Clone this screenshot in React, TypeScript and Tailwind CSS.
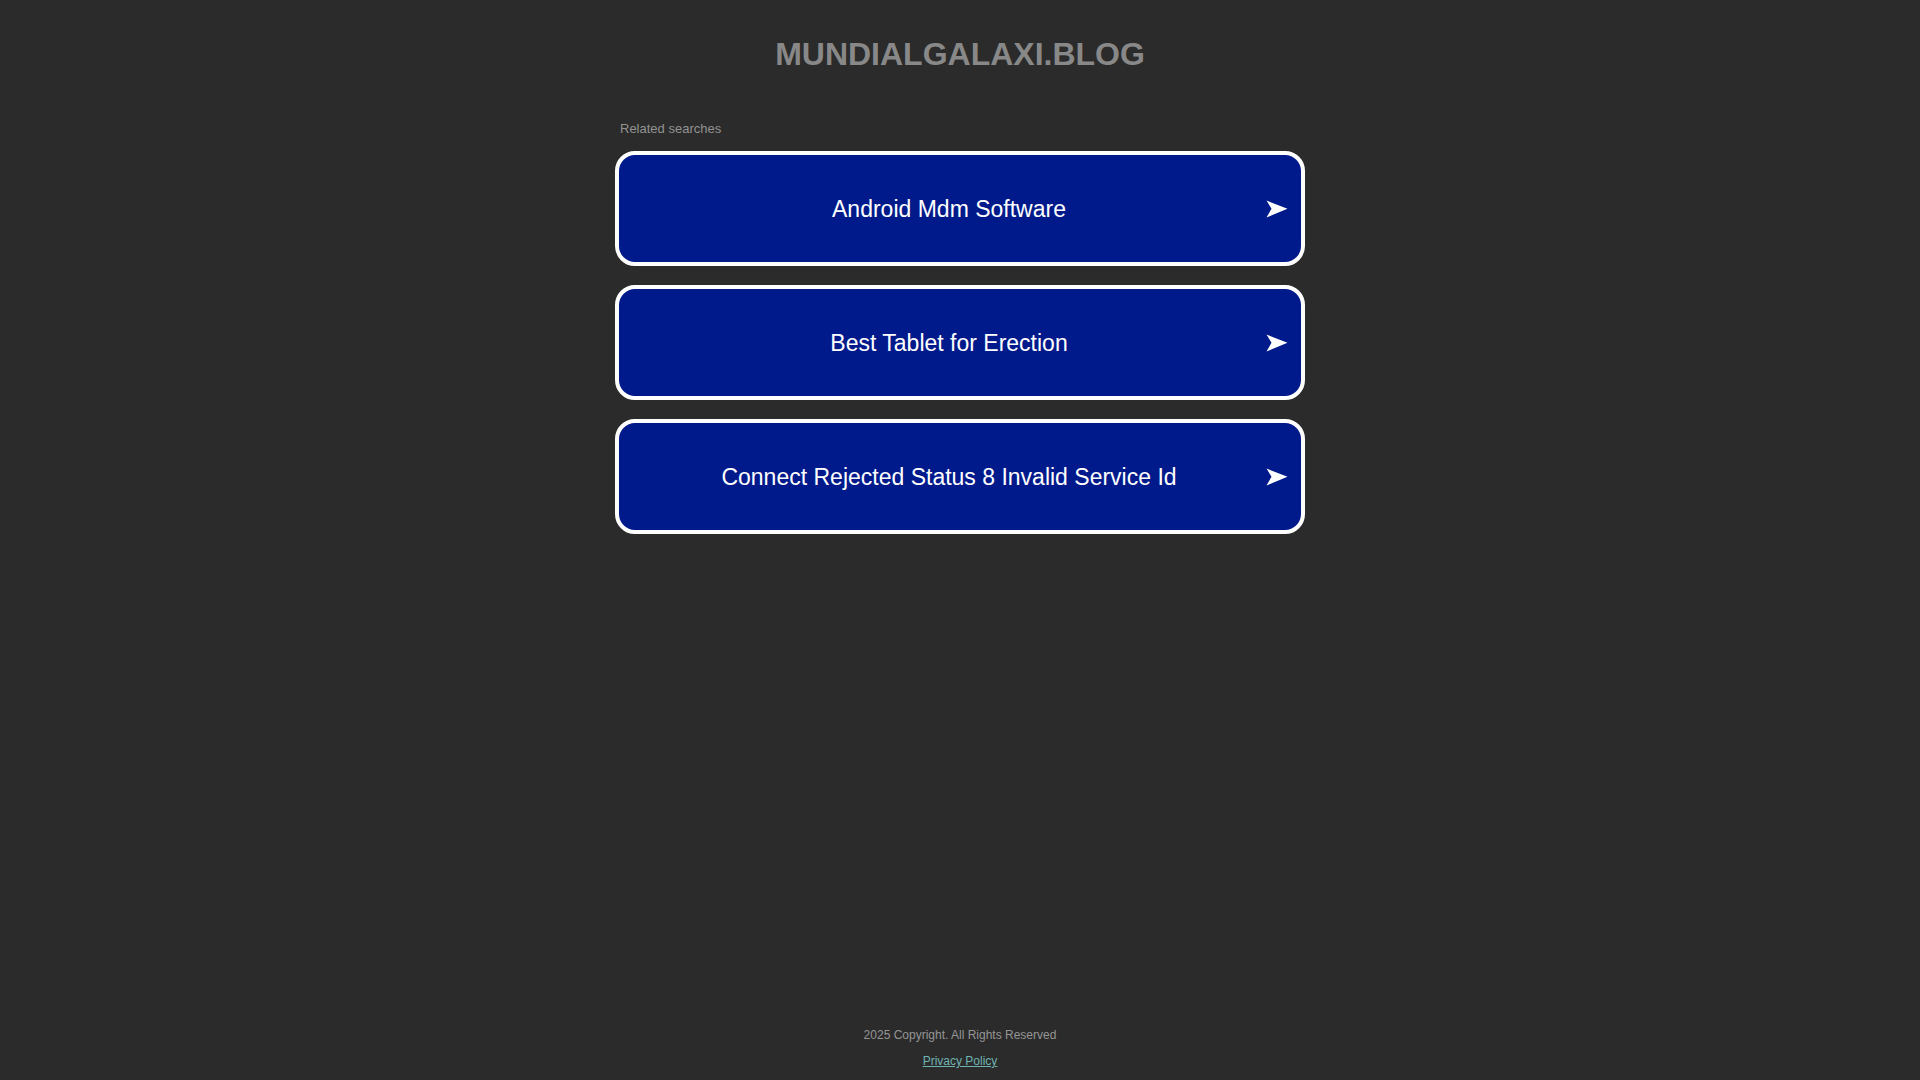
import React from "react";

const items = [
  "Android Mdm Software",
  "Best Tablet for Erection",
  "Connect Rejected Status 8 Invalid Service Id",
];

function Arrow() {
  return (
    <svg width="22" height="18" viewBox="0 0 22 18" className="block">
      <path d="M0.5 0.5 L21.5 8.8 L0.5 17.5 L5.5 8.8 Z" fill="#ffffff" />
    </svg>
  );
}

export default function App() {
  return (
    <div
      className="min-h-screen flex flex-col bg-[#2b2b2b]"
      style={{ fontFamily: '"Liberation Sans", Arial, sans-serif' }}
    >
      <h1 className="pt-[36px] text-center text-[32px] leading-[37px] font-bold text-[#888888]">
        MUNDIALGALAXI.BLOG
      </h1>
      <div className="mx-auto w-[690px] mt-[48px]">
        <div className="pl-[5px] text-[13px] leading-[15px] text-[#929292]">
          Related searches
        </div>
        <div className="mt-[15px] flex flex-col gap-[19px]">
          {items.map((t) => (
            <a
              key={t}
              href="#"
              className="relative flex h-[115px] items-center justify-center rounded-[20px] border-[4px] border-white bg-[#011a8b] pl-[10px] pr-[32px] pt-[1px] text-[23px] text-white"
            >
              <span>{t}</span>
              <span className="absolute right-[13px] top-1/2 -translate-y-1/2">
                <Arrow />
              </span>
            </a>
          ))}
        </div>
      </div>
      <footer className="mt-auto pb-[12px] text-center text-[12px] leading-[14px]">
        <div className="text-[#959595]">2025 Copyright. All Rights Reserved</div>
        <div className="mt-[12px]">
          <a href="#" className="text-[#6fb3b3] underline">
            Privacy Policy
          </a>
        </div>
      </footer>
    </div>
  );
}
